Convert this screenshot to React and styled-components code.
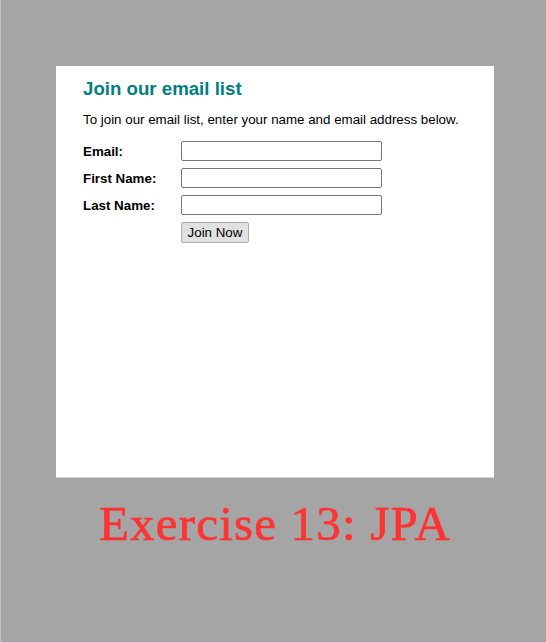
import React, { useState } from "react";
import styled, { createGlobalStyle } from "styled-components";

const Global = createGlobalStyle`
  html, body {
    margin: 0;
    background: #a5a5a5;
  }
  body {
    font-family: "Liberation Sans", Arial, sans-serif;
  }
`;

const Page = styled.div`
  min-height: 642px;
  box-sizing: border-box;
  padding: 66px 0 0 55px;
  border-left: 1px solid #c4c4c4;
`;

const Panel = styled.div`
  width: 438px;
  height: 412px;
  box-sizing: border-box;
  background: #fff;
  padding: 11px 27px;
  border-bottom: 1px solid #d6d6d6;
`;

const Heading = styled.h1`
  margin: 0 0 12px;
  font-size: 18.67px;
  font-weight: bold;
  color: #008080;
  line-height: 23px;
`;

const Intro = styled.p`
  margin: 0 0 13px;
  font-size: 13.33px;
  line-height: 16px;
  color: #000;
`;

const Form = styled.form`
  display: grid;
  grid-template-columns: 98px 201px;
  row-gap: 7px;
  align-items: center;
`;

const Label = styled.label`
  font-size: 13.33px;
  font-weight: bold;
  color: #000;
`;

const Input = styled.input`
  width: 201px;
  height: 20px;
  box-sizing: border-box;
  border: 1px solid #767676;
  border-radius: 2px;
  padding: 1px 2px;
  font-size: 13.33px;
  font-family: inherit;
  background: #fff;
`;

const Button = styled.button`
  grid-column: 2;
  justify-self: start;
  width: 68px;
  height: 21px;
  padding: 1px 4px;
  font-size: 13.33px;
  font-family: inherit;
  color: #000;
  background: #e1e1e1;
  border: 1px solid #adadad;
  border-radius: 2px;
`;

const Caption = styled.div`
  width: 438px;
  margin-top: 18px;
  text-align: center;
  font-family: "Liberation Serif", "DejaVu Serif", serif;
  font-size: 49px;
  letter-spacing: 1.2px;
  color: #ff3333;
  -webkit-text-stroke: 0.7px #ff3333;
  line-height: 56px;
`;

const fields = [
  { name: "email", label: "Email:" },
  { name: "firstName", label: "First Name:" },
  { name: "lastName", label: "Last Name:" },
];

const App = () => {
  let [values, setValues] = useState({ email: "", firstName: "", lastName: "" });

  let handleChange = (e) =>
    setValues({ ...values, [e.target.name]: e.target.value });

  return (
    <>
      <Global />
      <Page>
        <Panel>
          <Heading>Join our email list</Heading>
          <Intro>To join our email list, enter your name and email address below.</Intro>
          <Form onSubmit={(e) => e.preventDefault()}>
            {fields.map((f) => (
              <React.Fragment key={f.name}>
                <Label htmlFor={f.name}>{f.label}</Label>
                <Input
                  id={f.name}
                  name={f.name}
                  type="text"
                  value={values[f.name]}
                  onChange={handleChange}
                />
              </React.Fragment>
            ))}
            <Button type="submit">Join Now</Button>
          </Form>
        </Panel>
        <Caption>Exercise 13: JPA</Caption>
      </Page>
    </>
  );
};

export default App;
